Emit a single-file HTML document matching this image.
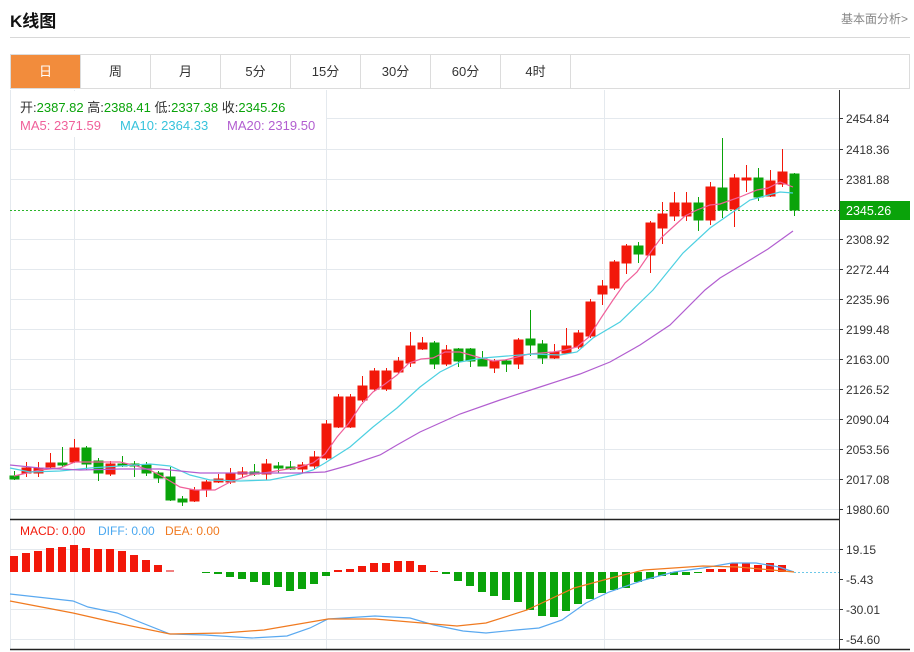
<!DOCTYPE html>
<html><head><meta charset="utf-8"><style>
body{margin:0;width:914px;height:652px;background:#fff;font-family:"Liberation Sans","Noto Sans CJK SC",sans-serif;position:relative;overflow:hidden}
.t{position:absolute;left:10px;top:7px;font-size:17px;font-weight:bold;color:#111}
.r{position:absolute;right:6px;top:10px;font-size:12px;color:#888}
.hl{position:absolute;left:10px;top:37px;width:900px;height:1px;background:#d8d8d8}
.tabs{position:absolute;left:10px;top:54px;width:900px;height:35px;border:1px solid #dcdcdc;box-sizing:border-box;display:flex}
.tabs div{width:70px;box-sizing:border-box;border-right:1px solid #dcdcdc;text-align:center;line-height:33px;font-size:13px;color:#333}
.tabs div.on{background:#f28c3c;color:#fff}
svg{position:absolute;left:0;top:0}
</style></head><body>
<div class="t">K线图</div><div class="r">基本面分析&gt;</div><div class="hl"></div>
<div class="tabs"><div class="on">日</div><div>周</div><div>月</div><div>5分</div><div>15分</div><div>30分</div><div>60分</div><div>4时</div></div>
<svg width="914" height="652" viewBox="0 0 914 652" font-family="Liberation Sans,Noto Sans CJK SC,sans-serif">
<g stroke="#e4e9ee" stroke-width="1">
<line x1="10" y1="118.5" x2="839" y2="118.5"/><line x1="10" y1="149.5" x2="839" y2="149.5"/><line x1="10" y1="179.5" x2="839" y2="179.5"/><line x1="10" y1="239.5" x2="839" y2="239.5"/><line x1="10" y1="269.5" x2="839" y2="269.5"/><line x1="10" y1="299.5" x2="839" y2="299.5"/><line x1="10" y1="329.5" x2="839" y2="329.5"/><line x1="10" y1="359.5" x2="839" y2="359.5"/><line x1="10" y1="389.5" x2="839" y2="389.5"/><line x1="10" y1="419.5" x2="839" y2="419.5"/><line x1="10" y1="449.5" x2="839" y2="449.5"/><line x1="10" y1="479.5" x2="839" y2="479.5"/><line x1="10" y1="509.5" x2="839" y2="509.5"/>
<line x1="10" y1="549.5" x2="839" y2="549.5"/><line x1="10" y1="609.5" x2="839" y2="609.5"/><line x1="10" y1="639.5" x2="839" y2="639.5"/>
<line x1="74.5" y1="90" x2="74.5" y2="649"/><line x1="326.5" y1="90" x2="326.5" y2="649"/><line x1="604.5" y1="90" x2="604.5" y2="649"/>
<line x1="10.5" y1="90" x2="10.5" y2="649"/>
</g>
<line x1="10" y1="210.5" x2="839" y2="210.5" stroke="#2bb52b" stroke-dasharray="2,2"/>
<line x1="794" y1="572.5" x2="839" y2="572.5" stroke="#6cc8e8" stroke-dasharray="2,2"/>
<g fill="#0aa30a" stroke="#0aa30a">
<line x1="14.5" y1="471" x2="14.5" y2="480"/><rect x="10" y="476" width="9" height="3"/>
<line x1="62.5" y1="447" x2="62.5" y2="467"/><rect x="58" y="463" width="9" height="2"/>
<line x1="86.5" y1="446" x2="86.5" y2="470"/><rect x="82" y="448" width="9" height="16"/>
<line x1="98.5" y1="458" x2="98.5" y2="481"/><rect x="94" y="461" width="9" height="12"/>
<line x1="122.5" y1="456" x2="122.5" y2="467"/><rect x="118" y="464" width="9" height="2"/>
<line x1="134.5" y1="461" x2="134.5" y2="477"/><rect x="130" y="464" width="9" height="2"/>
<line x1="146.5" y1="462" x2="146.5" y2="476"/><rect x="142" y="465" width="9" height="8"/>
<line x1="158.5" y1="471" x2="158.5" y2="483"/><rect x="154" y="473" width="9" height="5"/>
<line x1="170.5" y1="467" x2="170.5" y2="501"/><rect x="166" y="477" width="9" height="23"/>
<line x1="182.5" y1="496" x2="182.5" y2="506"/><rect x="178" y="499" width="9" height="3"/>
<line x1="254.5" y1="464" x2="254.5" y2="476"/><rect x="250" y="472" width="9" height="2"/>
<line x1="278.5" y1="462" x2="278.5" y2="473"/><rect x="274" y="466" width="9" height="2"/>
<line x1="290.5" y1="461" x2="290.5" y2="470"/><rect x="286" y="467" width="9" height="2"/>
<line x1="434.5" y1="341" x2="434.5" y2="369"/><rect x="430" y="343" width="9" height="21"/>
<line x1="458.5" y1="348" x2="458.5" y2="367"/><rect x="454" y="349" width="9" height="12"/>
<line x1="470.5" y1="348" x2="470.5" y2="367"/><rect x="466" y="349" width="9" height="12"/>
<line x1="482.5" y1="351" x2="482.5" y2="366"/><rect x="478" y="359" width="9" height="7"/>
<line x1="506.5" y1="359" x2="506.5" y2="372"/><rect x="502" y="361" width="9" height="3"/>
<line x1="530.5" y1="310" x2="530.5" y2="356"/><rect x="526" y="339" width="9" height="6"/>
<line x1="542.5" y1="340" x2="542.5" y2="364"/><rect x="538" y="344" width="9" height="14"/>
<line x1="638.5" y1="242" x2="638.5" y2="263"/><rect x="634" y="246" width="9" height="8"/>
<line x1="698.5" y1="197" x2="698.5" y2="231"/><rect x="694" y="203" width="9" height="17"/>
<line x1="722.5" y1="138" x2="722.5" y2="218"/><rect x="718" y="188" width="9" height="22"/>
<line x1="758.5" y1="168" x2="758.5" y2="201"/><rect x="754" y="178" width="9" height="19"/>
<line x1="794.5" y1="173" x2="794.5" y2="216"/><rect x="790" y="174" width="9" height="36"/>
</g>
<g fill="#f2180a" stroke="#f2180a">
<line x1="26.5" y1="462" x2="26.5" y2="477"/><rect x="22" y="468" width="9" height="5"/>
<line x1="38.5" y1="462" x2="38.5" y2="477"/><rect x="34" y="468" width="9" height="5"/>
<line x1="50.5" y1="453" x2="50.5" y2="469"/><rect x="46" y="463" width="9" height="4"/>
<line x1="74.5" y1="439" x2="74.5" y2="463"/><rect x="70" y="448" width="9" height="14"/>
<line x1="110.5" y1="461" x2="110.5" y2="476"/><rect x="106" y="464" width="9" height="10"/>
<line x1="194.5" y1="487" x2="194.5" y2="502"/><rect x="190" y="490" width="9" height="11"/>
<line x1="206.5" y1="480" x2="206.5" y2="497"/><rect x="202" y="482" width="9" height="8"/>
<line x1="218.5" y1="474" x2="218.5" y2="483"/><rect x="214" y="479" width="9" height="3"/>
<line x1="230.5" y1="468" x2="230.5" y2="484"/><rect x="226" y="474" width="9" height="8"/>
<line x1="242.5" y1="467" x2="242.5" y2="477"/><rect x="238" y="472" width="9" height="2"/>
<line x1="266.5" y1="459" x2="266.5" y2="480"/><rect x="262" y="464" width="9" height="10"/>
<line x1="302.5" y1="462" x2="302.5" y2="473"/><rect x="298" y="465" width="9" height="4"/>
<line x1="314.5" y1="451" x2="314.5" y2="469"/><rect x="310" y="457" width="9" height="9"/>
<line x1="326.5" y1="420" x2="326.5" y2="460"/><rect x="322" y="424" width="9" height="34"/>
<line x1="338.5" y1="394" x2="338.5" y2="428"/><rect x="334" y="397" width="9" height="30"/>
<line x1="350.5" y1="394" x2="350.5" y2="428"/><rect x="346" y="397" width="9" height="30"/>
<line x1="362.5" y1="376" x2="362.5" y2="402"/><rect x="358" y="386" width="9" height="14"/>
<line x1="374.5" y1="368" x2="374.5" y2="391"/><rect x="370" y="371" width="9" height="18"/>
<line x1="386.5" y1="368" x2="386.5" y2="391"/><rect x="382" y="371" width="9" height="18"/>
<line x1="398.5" y1="357" x2="398.5" y2="374"/><rect x="394" y="361" width="9" height="11"/>
<line x1="410.5" y1="332" x2="410.5" y2="367"/><rect x="406" y="346" width="9" height="17"/>
<line x1="422.5" y1="337" x2="422.5" y2="350"/><rect x="418" y="343" width="9" height="6"/>
<line x1="446.5" y1="345" x2="446.5" y2="366"/><rect x="442" y="350" width="9" height="14"/>
<line x1="494.5" y1="359" x2="494.5" y2="373"/><rect x="490" y="361" width="9" height="7"/>
<line x1="518.5" y1="338" x2="518.5" y2="369"/><rect x="514" y="340" width="9" height="24"/>
<line x1="554.5" y1="344" x2="554.5" y2="359"/><rect x="550" y="352" width="9" height="6"/>
<line x1="566.5" y1="328" x2="566.5" y2="354"/><rect x="562" y="346" width="9" height="7"/>
<line x1="578.5" y1="330" x2="578.5" y2="349"/><rect x="574" y="333" width="9" height="14"/>
<line x1="590.5" y1="299" x2="590.5" y2="338"/><rect x="586" y="302" width="9" height="34"/>
<line x1="602.5" y1="280" x2="602.5" y2="305"/><rect x="598" y="286" width="9" height="8"/>
<line x1="614.5" y1="260" x2="614.5" y2="290"/><rect x="610" y="262" width="9" height="26"/>
<line x1="626.5" y1="244" x2="626.5" y2="274"/><rect x="622" y="246" width="9" height="17"/>
<line x1="650.5" y1="221" x2="650.5" y2="273"/><rect x="646" y="223" width="9" height="32"/>
<line x1="662.5" y1="202" x2="662.5" y2="244"/><rect x="658" y="214" width="9" height="14"/>
<line x1="674.5" y1="192" x2="674.5" y2="221"/><rect x="670" y="203" width="9" height="13"/>
<line x1="686.5" y1="192" x2="686.5" y2="221"/><rect x="682" y="203" width="9" height="13"/>
<line x1="710.5" y1="182" x2="710.5" y2="225"/><rect x="706" y="187" width="9" height="33"/>
<line x1="734.5" y1="174" x2="734.5" y2="227"/><rect x="730" y="178" width="9" height="31"/>
<line x1="746.5" y1="165" x2="746.5" y2="192"/><rect x="742" y="178" width="9" height="2"/>
<line x1="770.5" y1="170" x2="770.5" y2="197"/><rect x="766" y="181" width="9" height="15"/>
<line x1="782.5" y1="149" x2="782.5" y2="187"/><rect x="778" y="172" width="9" height="12"/>
</g>
<g fill="none" stroke-width="1.2">
<polyline stroke="#f0609a" points="14,476 40,470 60,468 75,462 95,462 120,462 133,465 150,470 165,478 180,487 195,490 215,490 230,482 250,475 270,472 300,467 313,463 325,454 337,437 349,423 361,405 373,392 385,384 397,375 409,363 421,359 433,358 445,352 460,352 481,358 493,361 505,360 517,357 529,354 541,353 553,352 565,350 577,347 589,337 601,318 613,300 625,283 637,272 650,253 661,238 673,227 685,216 697,210 710,205 720,204 740,197 757,190 768,188 780,182 793,187"/>
<polyline stroke="#4dd0e1" points="10,468 30,472 60,471 90,468 120,466 150,464 170,466 190,475 210,480 240,481 270,480 300,474 313,470 325,463 350,447 373,427 397,408 420,387 440,372 460,362 483,358 507,356 533,354 560,355 577,352 593,338 620,322 653,290 683,253 710,228 750,200 780,192 793,193"/>
<polyline stroke="#b25ed0" points="10,465 40,468 80,470 120,469 160,469 200,473 240,473 280,473 300,473 325,472 350,465 380,455 397,445 420,432 460,414 500,400 540,387 580,374 610,362 640,345 670,325 705,290 720,278 745,263 768,249 793,231"/>
</g>
<g fill="#f2180a">
<rect x="10" y="556" width="8" height="16"/><rect x="22" y="553" width="8" height="19"/><rect x="34" y="551" width="8" height="21"/><rect x="46" y="548" width="8" height="24"/><rect x="58" y="547" width="8" height="25"/><rect x="70" y="545" width="8" height="27"/><rect x="82" y="548" width="8" height="24"/><rect x="94" y="549" width="8" height="23"/><rect x="106" y="549" width="8" height="23"/><rect x="118" y="551" width="8" height="21"/><rect x="130" y="555" width="8" height="17"/><rect x="142" y="560" width="8" height="12"/><rect x="154" y="565" width="8" height="7"/><rect x="166" y="570" width="8" height="2" fill="#f08080"/>
<rect x="334" y="570" width="8" height="2"/><rect x="346" y="569" width="8" height="3"/><rect x="358" y="566" width="8" height="6"/><rect x="370" y="563" width="8" height="9"/><rect x="382" y="563" width="8" height="9"/><rect x="394" y="561" width="8" height="11"/><rect x="406" y="561" width="8" height="11"/><rect x="418" y="565" width="8" height="7"/><rect x="430" y="571" width="8" height="1"/>
<rect x="706" y="569" width="8" height="3"/><rect x="718" y="569" width="8" height="3"/><rect x="730" y="563" width="8" height="9"/><rect x="742" y="563" width="8" height="9"/><rect x="754" y="565" width="8" height="7"/><rect x="766" y="563" width="8" height="9"/><rect x="778" y="565" width="8" height="7"/>
</g>
<g fill="#0aa30a">
<rect x="202" y="572" width="8" height="1"/><rect x="214" y="572" width="8" height="2"/><rect x="226" y="572" width="8" height="5"/><rect x="238" y="572" width="8" height="7"/><rect x="250" y="572" width="8" height="10"/><rect x="262" y="572" width="8" height="13"/><rect x="274" y="572" width="8" height="15"/><rect x="286" y="572" width="8" height="19"/><rect x="298" y="572" width="8" height="17"/><rect x="310" y="572" width="8" height="12"/><rect x="322" y="572" width="8" height="4"/>
<rect x="442" y="572" width="8" height="2"/><rect x="454" y="572" width="8" height="9"/><rect x="466" y="572" width="8" height="14"/><rect x="478" y="572" width="8" height="20"/><rect x="490" y="572" width="8" height="24"/><rect x="502" y="572" width="8" height="28"/><rect x="514" y="572" width="8" height="30"/><rect x="526" y="572" width="8" height="38"/><rect x="538" y="572" width="8" height="44"/><rect x="550" y="572" width="8" height="45"/><rect x="562" y="572" width="8" height="39"/><rect x="574" y="572" width="8" height="32"/><rect x="586" y="572" width="8" height="27"/><rect x="598" y="572" width="8" height="21"/><rect x="610" y="572" width="8" height="18"/><rect x="622" y="572" width="8" height="16"/><rect x="634" y="572" width="8" height="10"/><rect x="646" y="572" width="8" height="7"/><rect x="658" y="572" width="8" height="4"/><rect x="670" y="572" width="8" height="3"/><rect x="682" y="572" width="8" height="3"/><rect x="694" y="572" width="8" height="1"/>
</g>
<g fill="none" stroke-width="1.2">
<polyline stroke="#5aa9f0" points="10,594 73,601 88,607 117,613 170,634 205,635 252,638 287,636 310,628 328,619 375,616 410,618 434,625 463,631 486,633 516,630 539,628 562,620 586,603 609,592 644,580 674,572 703,568 732,563 756,563 779,567 794,572"/>
<polyline stroke="#f07a20" points="10,601 73,613 117,623 170,634 223,633 264,630 328,619 375,619 457,626 486,623 527,610 574,588 615,577 644,570 703,566 738,567 794,572"/>
</g>
<line x1="839.5" y1="90" x2="839.5" y2="649" stroke="#333"/>
<line x1="10" y1="519.5" x2="839" y2="519.5" stroke="#222" stroke-width="1.5"/>
<line x1="10" y1="649.5" x2="910" y2="649.5" stroke="#222" stroke-width="1.5"/>
<g stroke="#333"><line x1="839" y1="118.5" x2="843" y2="118.5"/><line x1="839" y1="149.5" x2="843" y2="149.5"/><line x1="839" y1="179.5" x2="843" y2="179.5"/><line x1="839" y1="239.5" x2="843" y2="239.5"/><line x1="839" y1="269.5" x2="843" y2="269.5"/><line x1="839" y1="299.5" x2="843" y2="299.5"/><line x1="839" y1="329.5" x2="843" y2="329.5"/><line x1="839" y1="359.5" x2="843" y2="359.5"/><line x1="839" y1="389.5" x2="843" y2="389.5"/><line x1="839" y1="419.5" x2="843" y2="419.5"/><line x1="839" y1="449.5" x2="843" y2="449.5"/><line x1="839" y1="479.5" x2="843" y2="479.5"/><line x1="839" y1="509.5" x2="843" y2="509.5"/><line x1="839" y1="549.5" x2="843" y2="549.5"/><line x1="839" y1="579.5" x2="843" y2="579.5"/><line x1="839" y1="609.5" x2="843" y2="609.5"/><line x1="839" y1="639.5" x2="843" y2="639.5"/></g>
<g font-size="12" fill="#333">
<text x="846" y="123">2454.84</text><text x="846" y="154">2418.36</text><text x="846" y="184">2381.88</text><text x="846" y="244">2308.92</text><text x="846" y="274">2272.44</text><text x="846" y="304">2235.96</text><text x="846" y="334">2199.48</text><text x="846" y="364">2163.00</text><text x="846" y="394">2126.52</text><text x="846" y="424">2090.04</text><text x="846" y="454">2053.56</text><text x="846" y="484">2017.08</text><text x="846" y="514">1980.60</text>
<text x="846" y="554">19.15</text><text x="846" y="584">-5.43</text><text x="846" y="614">-30.01</text><text x="846" y="644">-54.60</text>
</g>
<rect x="840" y="201" width="70" height="19" fill="#0aa30a"/>
<text x="846" y="215" font-size="12.5" fill="#fff">2345.26</text>
<rect x="11" y="91" width="315" height="46" fill="#fff"/>
<g font-size="13">
<text x="20" y="112" fill="#333">开:<tspan fill="#0aa30a">2387.82</tspan>  <tspan fill="#333">高:</tspan><tspan fill="#0aa30a">2388.41</tspan>  <tspan fill="#333">低:</tspan><tspan fill="#0aa30a">2337.38</tspan>  <tspan fill="#333">收:</tspan><tspan fill="#0aa30a">2345.26</tspan></text>
<text x="20" y="130" fill="#f0609a">MA5: 2371.59</text><text x="120" y="130" fill="#37c3dc">MA10: 2364.33</text><text x="227" y="130" fill="#b25ed0">MA20: 2319.50</text>
</g>
<g font-size="12"><text x="20" y="535" fill="#f2180a">MACD: 0.00</text><text x="98" y="535" fill="#4aa8f0">DIFF: 0.00</text><text x="165" y="535" fill="#f07a20">DEA: 0.00</text></g>
</svg>
</body></html>
